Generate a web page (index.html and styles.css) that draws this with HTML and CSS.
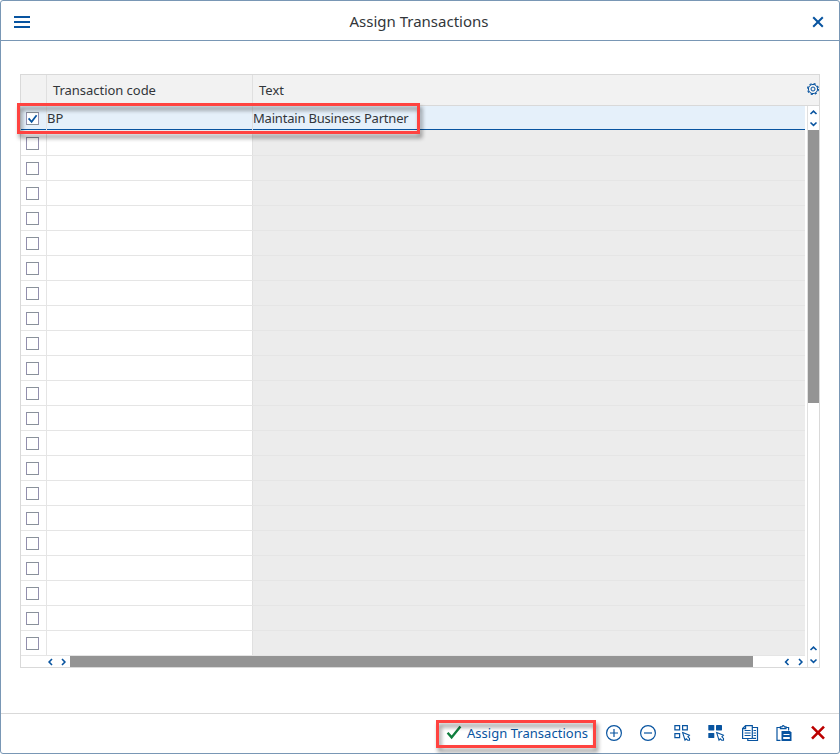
FILE: index.html
```html
<!DOCTYPE html>
<html lang="en">
<head>
<meta charset="utf-8">
<title>Assign Transactions</title>
<link rel="stylesheet" href="styles.css">
</head>
<body>
<div class="dialog">
  <header class="titlebar">
    <svg class="icon" viewBox="0 0 16 16"><path class="fill" d="M0 2h16v2H0zM0 7h16v2H0zM0 12h16v2H0z"/></svg>
    <h1 class="title">Assign Transactions</h1>
    <svg class="icon" viewBox="0 0 16 16"><path class="line close" d="M3.200 3.200l9.600 9.600M12.800 3.200l-9.600 9.600"/></svg>
  </header>
  <main class="content">
    <div class="table">
      <div class="thead">
        <div class="corner"></div>
        <div class="th code">Transaction code</div>
        <div class="th text">Text</div>
        <svg class="gear" viewBox="0 0 12 12"><circle cx="6" cy="6" r="5.400" class="teeth"/><circle cx="6" cy="6" r="4.600" class="line thin"/><circle cx="6" cy="6" r="2" class="line thin"/></svg>
      </div>
      <div class="tbody">
        <div class="rows" id="rows">
          <div class="row selected">
            <div class="check"><span class="box"><svg viewBox="0 0 11 11"><path class="line tick" d="M1.600 5.400l3 3.400L9.600 2.200"/></svg></span></div>
            <div class="cell code">BP</div>
            <div class="cell text">Maintain Business Partner</div>
          </div>
        </div>
        <div class="vscroll">
          <svg class="arrow" viewBox="0 0 12 12"><path class="line arr" d="M2.500 8l3-2.900 3 2.900"/></svg>
          <svg class="arrow" viewBox="0 0 12 12"><path class="line arr" d="M2.500 4.500l3 2.900 3-2.900"/></svg>
          <div class="vthumb"></div>
          <svg class="arrow last-up" viewBox="0 0 12 12"><path class="line arr" d="M2.500 7l3-2.900 3 2.900"/></svg>
          <svg class="arrow" viewBox="0 0 12 12"><path class="line arr" d="M2.500 4.500l3 2.900 3-2.900"/></svg>
        </div>
        <div class="hscroll">
          <svg class="arrow" viewBox="0 0 12 12"><path class="line arr" d="M7 3L4.100 6 7 9"/></svg>
          <svg class="arrow" viewBox="0 0 12 12"><path class="line arr" d="M5 3l2.900 3L5 9"/></svg>
          <div class="hthumb"></div>
          <svg class="arrow last-left" viewBox="0 0 12 12"><path class="line arr" d="M7.500 3L4.600 6l2.900 3"/></svg>
          <svg class="arrow" viewBox="0 0 12 12"><path class="line arr" d="M6 3l2.900 3L6 9"/></svg>
        </div>
      </div>
    </div>
  </main>
  <footer class="toolbar">
    <button class="assign"><svg class="icon" viewBox="0 0 16 16"><path class="accept" d="M1.600 7.800l4 4.600L14.400 1.600"/></svg><span>Assign Transactions</span></button>
    <svg class="icon" viewBox="0 0 16 16"><circle class="line" cx="8" cy="8" r="7.400"/><path class="line" d="M4 8h8M8 4v8"/></svg>
    <svg class="icon" viewBox="0 0 16 16"><circle class="line" cx="8" cy="8" r="7.400"/><path class="line" d="M4 8h8"/></svg>
    <svg class="icon" viewBox="0 0 16 16"><path class="line" d="M.9.6h4.700v4.200H.9zM8.600.6h4.700v4.200H8.600zM.9 8.600h4.700v4H.9z"/><path class="line cursor" d="M8.700 7.600l6.700 2.700-1.500 1.500 1.600 1.600v1.800h-1.800l-1.500-1.400-1.200 1.400z"/></svg>
    <svg class="icon" viewBox="0 0 16 16"><rect class="fill" x=".3" width="6" height="5.400" rx=".6"/><rect class="fill" x="8" width="6" height="5.400" rx=".6"/><rect class="fill" x=".3" y="8" width="6" height="5" rx=".6"/><path class="line cursor" d="M8.700 7.600l6.700 2.700-1.500 1.500 1.600 1.600v1.800h-1.800l-1.500-1.400-1.200 1.400z"/></svg>
    <svg class="icon" viewBox="0 0 16 16"><path class="line" d="M10.300 13.500H.6V3.600L3.600.6h6.700zM3.600.6v3H.6M10.300 2.500h5.200v13H5.800v-2M2.600 5.500h6M2.600 8h6M2.600 10.500h6M11.500 5.500h2.500M11.500 8h2.500M11.500 10.500h2.500M11 13.300h3"/></svg>
    <svg class="icon" viewBox="0 0 16 16"><path class="line" d="M4.500 15.400H1V2.500h3M10 2.500h2.600V5.500M4.400 3.600V1.800H6Q7.200-.4 8.400 1.800H10v1.800z"/><path class="fill" d="M5.500 6H14l1.500 1.500V16h-10z"/><path class="paper" d="M7.500 9h6v1h-6zM7.200 12h6.600v2H7.200z"/></svg>
    <svg class="icon" viewBox="0 0 16 16"><path class="cancel" d="M2 1.600l12 12M14 1.600l-12 12"/></svg>
  </footer>
  <div class="marker marker-row"></div>
  <div class="marker marker-button"></div>
</div>
<script src="script.js"></script>
</body>
</html>
```
FILE: styles.css
```css
* { box-sizing: border-box; }
body { margin: 0; background: #fff; font: 13px "Noto Sans", sans-serif; color: #32363a; }
.dialog { position: relative; width: 840px; height: 754px; border: 1px solid #7997b5; border-radius: 3px; display: flex; flex-direction: column; background: #fff; }
.titlebar { height: 40px; border-bottom: 1px solid #7997b5; display: flex; align-items: center; justify-content: space-between; padding: 3px 13px 0; }
.title { margin: 0 2px 2px 0; font-size: 15px; font-weight: 400; line-height: 20px; }
.icon { width: 16px; height: 16px; display: block; flex: none; overflow: visible; }
.fill { fill: #0854a0; }
.line { fill: none; stroke: #0854a0; stroke-width: 1.2; }
.thin { stroke-width: 1; }
.cursor { stroke-width: 1.1; }
.close { stroke-width: 2; }
.teeth { fill: none; stroke: #0854a0; stroke-width: 1.2; stroke-dasharray: 2.12 2.12; }
.content { flex: 1; padding: 33px 19px 0; }
.table { width: 800px; height: 594px; border: 1px solid #d9d9d9; }
.thead { height: 31px; background: #f2f2f2; border-bottom: 1px solid #d9d9d9; display: grid; grid-template-columns: 26px 206px 1fr 12px; }
.corner, .th.code { border-right: 1px solid #e0e0e0; }
.th { padding-left: 6px; line-height: 30px; }
.th.code { letter-spacing: -.04px; }
.gear { width: 12px; height: 12px; margin-top: 8px; overflow: visible; }
.tbody { display: grid; grid-template-columns: 786px 12px; grid-template-rows: 550px 11px; }
.rows { width: 784px; }
.row { height: 25px; display: grid; grid-template-columns: 26px 205px 1fr; border-bottom: 1px solid #e5e5e5; }
.check { border-right: 1px solid #e5e5e5; padding: 6px 0 0 5px; }
.box { display: block; width: 13px; height: 13px; border: 1px solid #89919a; border-color: #89919a #938fae; background: #fff; }
.box svg { display: block; width: 11px; height: 11px; }
.tick { stroke-width: 1.7; }
.cell { line-height: 24px; white-space: nowrap; }
.cell.text { background: #ececec; border-left: 1px solid #e0e0e0; letter-spacing: -.2px; }
.selected { background: #e5f0fa; border-bottom: 1px solid #ececec; }
.selected > div { box-shadow: inset 0 -1px #0854a0; }
.selected .cell.text { background: #e5f0fa; }
.vscroll { grid-row: 1 / 3; grid-column: 2; border-left: 1px solid #e0e0e0; display: flex; flex-direction: column; align-items: center; }
.arrow { width: 12px; height: 12px; flex: none; }
.arr { stroke-width: 1.6; }
.vthumb { width: 11px; height: 273px; background: #949494; }
.last-up { margin-top: auto; }
.hscroll { display: flex; align-items: center; padding: 0 0 0 24px; height: 11px; }
.hthumb { width: 683px; height: 11px; background: #949494; margin-left: 1px; }
.last-left { margin-left: 28px; }
.toolbar { height: 40px; border-top: 1px solid #d9d9d9; display: flex; align-items: center; justify-content: flex-end; gap: 18px; padding: 0 13px 1px; }
.assign { display: flex; align-items: center; gap: 5px; border: 0; padding: 0; background: none; font: inherit; font-size: 13px; letter-spacing: .03px; color: #0854a0; white-space: nowrap; }
.accept { fill: none; stroke: #107e3e; stroke-width: 2.4; }
.cancel { fill: none; stroke: #b00; stroke-width: 2.6; }
.paper { fill: #fff; }
.marker { position: absolute; border: 3px solid #ff4340; filter: drop-shadow(2px 4px 2px rgba(0, 0, 0, .45)); pointer-events: none; }
.marker-row { left: 16px; top: 102px; width: 403px; height: 31px; }
.marker-button { left: 435px; top: 719px; width: 160px; height: 28px; }
```
FILE: script.js
```js
const rows = document.getElementById('rows');
for (let i = 0; i < 21; i++) {
  const row = document.createElement('div');
  row.className = 'row';
  row.innerHTML = '<div class="check"><span class="box"></span></div><div class="cell code"></div><div class="cell text"></div>';
  rows.append(row);
}
```
